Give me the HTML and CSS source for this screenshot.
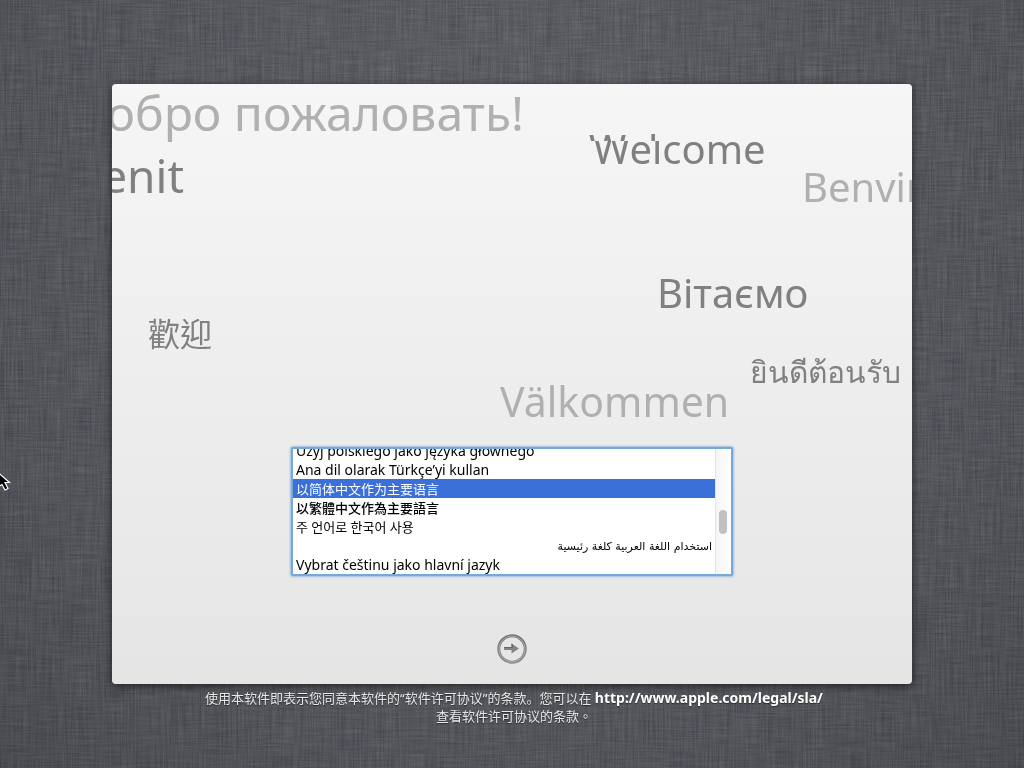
FILE: index.html
```html
<!DOCTYPE html>
<html lang="zh-CN">
<head>
<meta charset="utf-8">
<meta name="viewport" content="width=device-width, initial-scale=1">
<title>Welcome</title>
<link rel="stylesheet" href="styles.css">
</head>
<body>
<svg class="linen" aria-hidden="true">
  <filter id="weft" x="0" y="0" width="100%" height="100%" color-interpolation-filters="sRGB">
    <feTurbulence type="fractalNoise" baseFrequency="0.03 0.6" numOctaves="3" seed="4"/>
    <feColorMatrix values="0.2 0 0 0 0.23  0.2 0 0 0 0.24  0.18 0 0 0 0.27  0 0 0 0 1"/>
  </filter>
  <filter id="warp" x="0" y="0" width="100%" height="100%" color-interpolation-filters="sRGB">
    <feTurbulence type="fractalNoise" baseFrequency="0.6 0.02" numOctaves="3" seed="9"/>
    <feColorMatrix values="0.22 0 0 0 0.22  0.22 0 0 0 0.23  0.2 0 0 0 0.26  0 0 0 0 1"/>
  </filter>
  <rect width="100%" height="100%" filter="url(#weft)"/>
  <rect width="100%" height="100%" filter="url(#warp)" opacity="0.5"/>
</svg>
<div class="vignette"></div>

<div class="screen">
  <main class="panel">
    <div class="greetings">
      <span class="word word-ru" lang="ru">Добро пожаловать!</span>
      <span class="word word-ro dark" lang="ro">Bine ați venit</span>
      <h1 class="word word-en dark" lang="en" data-text="Welcome"><span>Welcome</span></h1>
      <span class="word word-it" lang="it">Benvinuti</span>
      <span class="word word-uk dark" lang="uk">Вітаємо</span>
      <span class="word word-zh dark" lang="zh-TW">歡迎</span>
      <span class="word word-th dark" lang="th">ยินดีต้อนรับ</span>
      <span class="word word-sv" lang="sv">Välkommen</span>
    </div>
    <form class="chooser">
      <div class="listbox">
        <div class="viewport">
          <select class="languages" size="7" aria-label="语言">
            <option lang="pl" class="latin">Użyj polskiego jako języka głównego</option>
            <option lang="tr" class="latin">Ana dil olarak Türkçe’yi kullan</option>
            <option lang="zh-CN" selected>以简体中文作为主要语言</option>
            <option lang="zh-TW" class="strong">以繁體中文作為主要語言</option>
            <option lang="ko">주 언어로 한국어 사용</option>
            <option lang="ar" dir="rtl" class="arabic">استخدام اللغة العربية كلغة رئيسية</option>
            <option lang="cs" class="latin">Vybrat češtinu jako hlavní jazyk</option>
          </select>
        </div>
        <div class="track"><div class="thumb"></div></div>
      </div>
      <button class="next" type="button" aria-label="继续">
        <svg width="30" height="30" viewBox="0 0 30 30">
          <defs><linearGradient id="ring" x1="0" y1="0" x2="0" y2="1"><stop offset="0" stop-color="#707070"/><stop offset="1" stop-color="#8c8c8c"/></linearGradient></defs>
          <circle cx="15" cy="15" r="13.2" fill="none" stroke="url(#ring)" stroke-width="3"/>
          <circle cx="15" cy="15" r="13" fill="none" stroke="#acacac" stroke-width="1"/>
          <path d="M7 13h7.500V9.500L22 14.500l-7.500 5V16H7z" fill="#858585"/>
          <path d="M7 13h7.500V9.500L16 10.500V14H7z" fill="#666"/>
        </svg>
      </button>
    </form>
  </main>
  <footer class="license">
    <p>使用本软件即表示您同意本软件的“软件许可协议”的条款。您可以在 <a href="http://www.apple.com/legal/sla/">http://www.apple.com/legal/sla/</a></p>
    <p>查看软件许可协议的条款<span lang="zh-TW">。</span></p>
  </footer>
</div>

<svg class="pointer" width="12" height="22" viewBox="0 0 12 22" aria-hidden="true">
  <path d="M-6 -1L9.500 12.500H5L8 18.500 5 20 2 14.500-2 17V-1z" fill="#000" stroke="#fff" stroke-width="1.200"/>
</svg>
</body>
</html>
```
FILE: styles.css
```css
* { box-sizing: border-box; }

body {
  margin: 0;
  min-height: 100vh;
  background: #54575e;
  font-family: "Noto Sans", "Noto Sans CJK SC", "Noto Sans CJK KR", "DejaVu Sans", sans-serif;
  font-size: 13px;
}

.linen, .vignette {
  position: fixed;
  inset: 0;
  width: 100%;
  height: 100%;
}

.vignette {
  background: radial-gradient(ellipse at 50% 30%, rgba(255, 255, 255, 0.06), rgba(0, 0, 0, 0.02) 70%, rgba(0, 0, 0, 0.12));
}

.screen {
  position: relative;
  min-height: 100vh;
  display: flex;
  flex-direction: column;
  align-items: center;
  padding: 84px 16px 40px;
}

.panel {
  position: relative;
  width: 100%;
  max-width: 800px;
  min-height: 600px;
  display: flex;
  flex-direction: column;
  justify-content: flex-end;
  overflow: hidden;
  border-radius: 4px;
  background: linear-gradient(#f6f6f6, #e5e5e5);
}

.screen::before {
  content: "";
  position: absolute;
  top: 84px;
  width: calc(100% - 32px);
  max-width: 800px;
  height: 600px;
  border-radius: 4px;
  box-shadow: 0 2px 8px rgba(0, 0, 0, 0.6);
}

.greetings { position: absolute; inset: 0; }

.word {
  position: absolute;
  margin: 0;
  font-size: 40px;
  font-weight: 400;
  line-height: 56px;
  white-space: nowrap;
  color: #b0b0b0;
}

.dark { color: #808080; }

.word-ru { right: 388px; top: 1px; font-size: 48px; }
.word-ro { right: 728px; top: 63px; font-size: 46px; }
.word-en { left: 481px; top: 37px; }
.word-it { left: 690px; top: 75px; }
.word-uk { left: 545px; top: 181px; }
.word-zh { left: 36px; top: 220px; font-size: 32px; font-family: "Noto Sans CJK TC", sans-serif; }
.word-th { left: 638px; top: 260px; font-size: 30px; font-weight: 500; }
.word-sv { left: 388px; top: 289px; font-size: 41px; }

/* The top of the word is drawn as a separate, shifted slice. */
.word-en span { display: block; clip-path: inset(20px 0 0 0); }
.word-en::before {
  content: attr(data-text);
  position: absolute;
  left: -4px;
  clip-path: inset(0 0 36px 0);
}

.chooser {
  position: relative;
  display: flex;
  flex-direction: column;
  align-items: center;
  gap: 58px;
  padding: 0 16px 20px;
}

.listbox {
  display: flex;
  width: 100%;
  max-width: 442px;
  height: 129px;
  border: 2px solid #7aa7d9;
  border-radius: 2px;
  box-shadow: 0 0 2px 1px #9dbfe4;
  background: #fff;
}

.viewport { flex: 1; overflow: hidden; }

.languages {
  display: block;
  width: 100%;
  height: 133px;
  margin-top: -8px;
  padding: 0;
  border: 0;
  outline: 0;
  overflow: hidden;
  background: #fff;
  color: #000;
  font: inherit;
  scrollbar-width: none;
}

.languages option {
  height: 19px;
  min-height: 19px;
  padding: 0 3px;
  line-height: 19px;
}

.languages option:checked {
  background: linear-gradient(#3b70d8, #3b70d8);
  color: #fff;
}

.latin { font-size: 14px; }
.strong { font-weight: 500; font-family: "Noto Sans CJK TC", sans-serif; }
.languages .arabic { padding-top: 4px; font-size: 11px; font-family: "DejaVu Sans", sans-serif; }

.track {
  width: 16px;
  padding-top: 61px;
  border-left: 1px solid #e4e4e4;
  background: linear-gradient(90deg, #f5f5f5, #fff);
}

.thumb {
  width: 8px;
  height: 24px;
  margin-left: 3px;
  border-radius: 4px;
  background: #c1c1c1;
}

.next {
  width: 30px;
  height: 30px;
  padding: 0;
  border: 0;
  border-radius: 50%;
  background: none;
}

.next svg { display: block; }

.license {
  position: relative;
  padding: 5px 0 0 4px;
  color: #e6e6e6;
  line-height: 18px;
  text-align: center;
  text-shadow: 0 1px 1px rgba(0, 0, 0, 0.5);
}

.license p { margin: 0; }
.license a { color: #fff; font-size: 14px; font-weight: 700; text-decoration: none; }

.pointer { position: absolute; left: 0; top: 470px; }
```
